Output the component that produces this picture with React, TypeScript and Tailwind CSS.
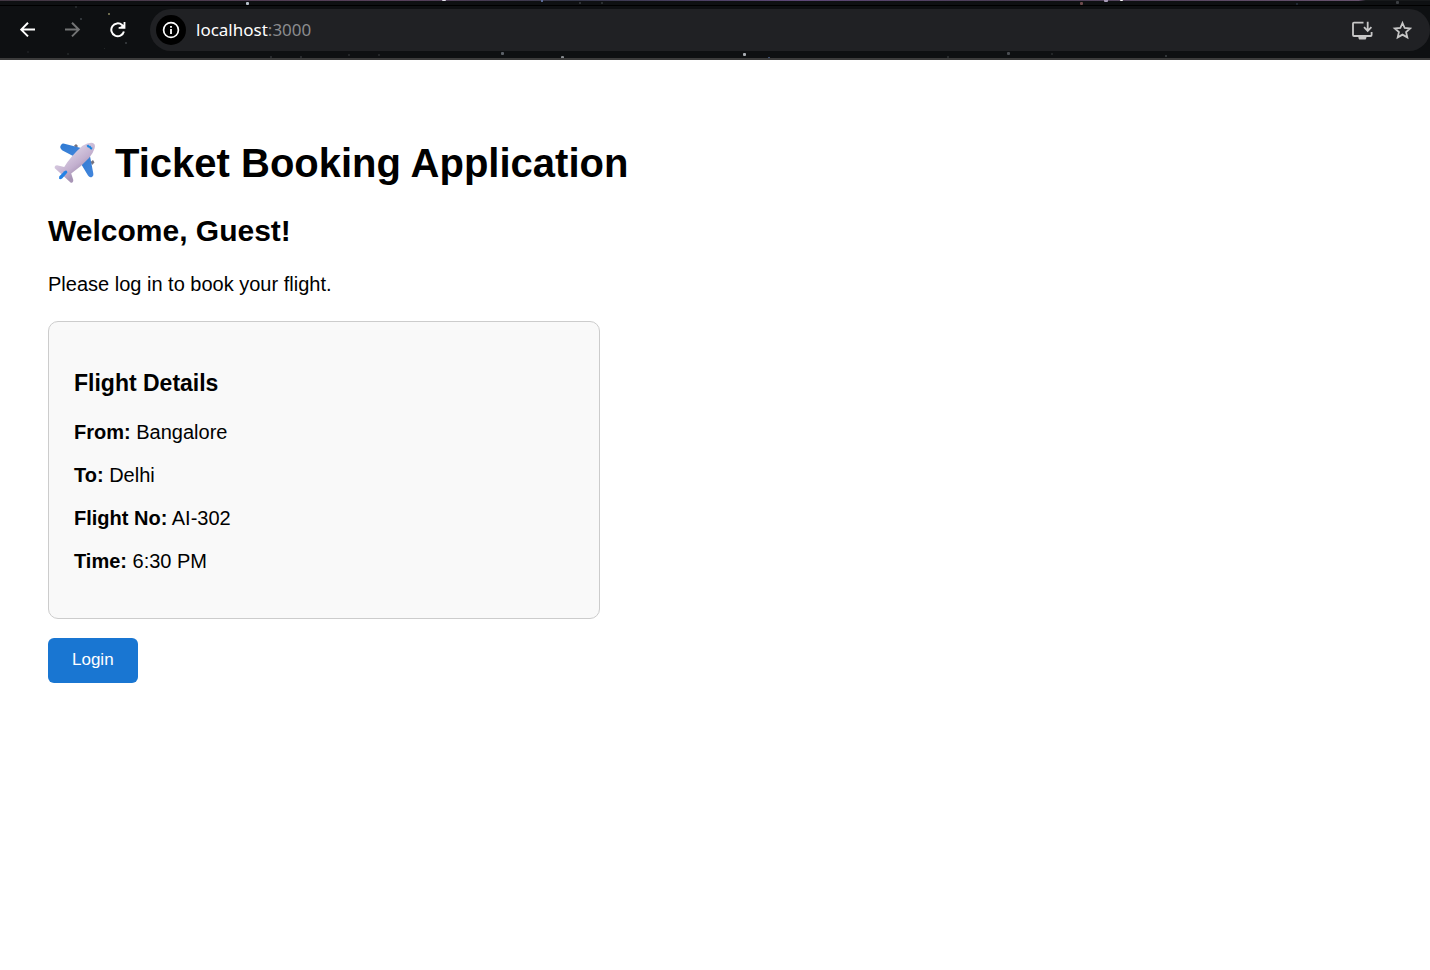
import React from 'react';

type Star = { x: number; y: number; r: number; fill: string };

const stars: Star[] = [
  { x: 246, y: 2, r: 3, fill: '#b9c2cc' },
  { x: 108, y: 13, r: 2, fill: '#8b8760' },
  { x: 80, y: 18, r: 2, fill: '#3d4247' },
  { x: 125, y: 42, r: 2, fill: '#3d4044' },
  { x: 67, y: 53, r: 2, fill: '#25282a' },
  { x: 27, y: 51, r: 2, fill: '#1f2124' },
  { x: 104, y: 48, r: 1, fill: '#2c2f31' },
  { x: 75, y: 6, r: 2, fill: '#2c2f33' },
  { x: 270, y: 56, r: 2, fill: '#303236' },
  { x: 300, y: 56, r: 2, fill: '#303236' },
  { x: 348, y: 54, r: 2, fill: '#2b2d2f' },
  { x: 378, y: 54, r: 2, fill: '#2b2d2f' },
  { x: 442, y: -3, r: 4, fill: '#e2e0ea' },
  { x: 501, y: 52, r: 3, fill: '#5c6168' },
  { x: 541, y: 0, r: 2, fill: '#6f83b8' },
  { x: 561, y: 56, r: 3, fill: '#85888d' },
  { x: 579, y: 2, r: 2, fill: '#3a3d40' },
  { x: 601, y: 2, r: 2, fill: '#35383b' },
  { x: 743, y: 53, r: 3, fill: '#a9adb3' },
  { x: 768, y: 57, r: 2, fill: '#4e638f' },
  { x: 947, y: 56, r: 2, fill: '#303336' },
  { x: 1007, y: 52, r: 3, fill: '#4a4d52' },
  { x: 1051, y: 53, r: 2, fill: '#2a2d2f' },
  { x: 1080, y: 2, r: 3, fill: '#6d4a4d' },
  { x: 1104, y: -2, r: 4, fill: '#a99bb8' },
  { x: 1120, y: -2, r: 3, fill: '#ffffff' },
  { x: 1165, y: 55, r: 2, fill: '#3d4044' },
  { x: 1296, y: 3, r: 2, fill: '#27303f' },
  { x: 1396, y: 1, r: 3, fill: '#3c3f43' },
];

function StarField() {
  return (
    <svg className="absolute inset-0 h-full w-full" aria-hidden="true">
      <defs>
        <linearGradient id="topEdge">
          <stop offset="0" stopColor="#423743" />
          <stop offset="0.28" stopColor="#57405b" />
          <stop offset="0.4" stopColor="#343648" />
          <stop offset="0.56" stopColor="#5e4878" />
          <stop offset="0.7" stopColor="#4a3d55" />
          <stop offset="0.95" stopColor="#66516d" />
          <stop offset="0.955" stopColor="#17191b" />
        </linearGradient>
      </defs>
      <rect width="100%" height="1" fill="url(#topEdge)" />
      {stars.map((s) => (
        <rect key={s.x} x={s.x} y={s.y} width={s.r} height={s.r} rx="1" fill={s.fill} />
      ))}
      <rect y="5" width="100%" height="1" fill="#000" />
    </svg>
  );
}

function ArrowIcon({ flip = false }: { flip?: boolean }) {
  return (
    <svg width="16" height="16" viewBox="0 0 16 16" fill="none" stroke="currentColor" strokeWidth="2" aria-hidden="true">
      {flip ? <path d="M0 7.6H13.5M7 0.8L13.8 7.6L7 14.4" /> : <path d="M15 7.6H1.5M8 0.8L1.2 7.6L8 14.4" />}
    </svg>
  );
}

function ReloadIcon() {
  return (
    <svg width="16" height="16" viewBox="0 0 16 16" aria-hidden="true">
      <path d="M13.9 9.4A6.4 6.4 0 1 1 12.1 3.1L13.6 4.6" fill="none" stroke="currentColor" strokeWidth="2" />
      <path d="M15.4 0V6.8H8.6V5.2L11 4.6L13.6 2.4V0Z" fill="currentColor" />
    </svg>
  );
}

function InfoIcon() {
  return (
    <svg width="18" height="18" viewBox="0 0 18 18" aria-hidden="true">
      <circle cx="9" cy="9" r="7.4" fill="none" stroke="currentColor" strokeWidth="1.7" />
      <path d="M9 5V6.8M9 8V13" stroke="currentColor" strokeWidth="1.8" />
    </svg>
  );
}

function InstallIcon() {
  return (
    <svg width="22" height="20" viewBox="0 0 22 20" fill="none" stroke="currentColor" strokeWidth="1.8" aria-hidden="true">
      <path d="M12.5 2.6H3Q2 2.6 2 3.6V15Q2 16 3 16H19.6Q20.6 16 20.6 15V12" />
      <path d="M16.7 1.8V10.4M13 7.2L16.7 10.9L20.4 7.2" />
      <path d="M7.4 16H15.4V18L14.6 19.4H8.2L7.4 18Z" fill="currentColor" stroke="none" />
    </svg>
  );
}

function StarIcon() {
  return (
    <svg width="20" height="20" viewBox="0 0 20 20" aria-hidden="true">
      <path
        d="M10.5 3L12.7 8L18.2 8.5L14.1 12.1L15.3 17.4L10.5 14.6L5.7 17.4L6.9 12.1L2.8 8.5L8.3 8Z"
        fill="none"
        stroke="currentColor"
        strokeWidth="1.8"
      />
    </svg>
  );
}

function PlaneIcon() {
  return (
    <svg className="ml-1.5 shrink-0" width="42" height="42" viewBox="0 0 42 42" aria-hidden="true">
      <defs>
        <linearGradient id="fuselage" x1="0.35" y1="0.3" x2="0.65" y2="0.7">
          <stop offset="0" stopColor="#d6c9df" />
          <stop offset="0.6" stopColor="#c3b0cf" />
          <stop offset="1" stopColor="#a895b6" />
        </linearGradient>
        <linearGradient id="wing" x1="0" y1="0" x2="1" y2="1">
          <stop offset="0" stopColor="#2f7ad2" />
          <stop offset="1" stopColor="#4386dc" />
        </linearGradient>
      </defs>
      <path d="M20 3.8L22 2L24 4L22 6.5ZM36.5 20L39 18L40.5 20.5L38 23Z" fill="#77727d" />
      <path d="M7.4 2.4Q8.4 1.2 10.4 1.8L28 6.2L20 14.5L8.5 8.4Q4.6 5.4 7.4 2.4Z" fill="url(#wing)" />
      <path d="M26.5 21L35.8 13L39.3 31.5Q39.8 33.4 38.5 34.5Q36 36.6 34 33.6Z" fill="url(#wing)" />
      <path
        d="M28.5 3.8Q34.5 0.2 38.8 1Q41.8 2 40.6 6.3Q39.3 11 35 16Q27 25 17.2 31.5L19.3 38Q19.3 41 16.8 40.8L9.2 33.8L0.8 26.3Q0 23.6 3 23.2L10.2 25Q17 14 28.5 3.8Z"
        fill="url(#fuselage)"
      />
      <path d="M5.4 34.2L10.4 29.2Q13 27.6 13.4 30.4L8.4 36.2Q6.2 38.2 5 36.6Z" fill="#2381e5" />
      <path d="M33.4 3.2L34.4 4.6L35.8 4.8L36.8 6.3L38.2 6.6" fill="none" stroke="#1684e2" strokeWidth="2" />
    </svg>
  );
}

function BrowserBar() {
  return (
    <header className="relative border-b-2 border-[#3c3c3c] bg-[#0e1012] pt-[9px] pb-[7px] font-['Noto_Sans',sans-serif]">
      <StarField />
      <div className="relative flex h-[42px] items-center">
        <nav className="flex w-[150px] shrink-0 gap-[29px] pl-5 text-white">
          <button type="button" aria-label="Back"><ArrowIcon /></button>
          <button type="button" aria-label="Forward" className="text-[#737475]"><ArrowIcon flip /></button>
          <button type="button" aria-label="Reload"><ReloadIcon /></button>
        </nav>
        <div className="flex h-full min-w-0 flex-1 items-center rounded-full bg-[#202124] pr-[18px] pl-1.5">
          <button type="button" aria-label="Site information" className="flex size-[30px] items-center justify-center rounded-full bg-black text-white">
            <InfoIcon />
          </button>
          <a href="#" className="ml-2.5 flex-1 text-[17px] leading-6 text-[#8b8c8e]">
            <span className="text-white">localhost</span>:3000
          </a>
          <div className="flex items-center gap-[19px] text-[#c7c7c7]">
            <button type="button" aria-label="Install app"><InstallIcon /></button>
            <button type="button" aria-label="Bookmark this page"><StarIcon /></button>
          </div>
        </div>
      </div>
    </header>
  );
}

const details = [
  { label: 'From:', value: 'Bangalore' },
  { label: 'To:', value: 'Delhi' },
  { label: 'Flight No:', value: 'AI-302' },
  { label: 'Time:', value: '6:30 PM' },
];

export default function App() {
  return (
    <div className="min-h-screen bg-white text-black">
      <BrowserBar />
      <main className="px-12 pt-20 pb-12 font-['Liberation_Sans',Arial,sans-serif] text-[20px] leading-[23px]">
        <h1 className="flex items-center gap-[19px] text-[40px] leading-[46px] font-bold">
          <PlaneIcon />
          Ticket Booking Application
        </h1>
        <h2 className="mt-7 text-[30px] leading-[34px] font-bold">Welcome, Guest!</h2>
        <p className="mt-[25px]">Please log in to book your flight.</p>
        <section className="mt-[25px] max-w-[552px] rounded-[10px] border border-[#cccccc] bg-[#f9f9f9] px-[25px] pt-12 pb-[45px]">
          <h3 className="text-[23px] leading-[26px] font-bold">Flight Details</h3>
          <div className="mt-[25px] flex flex-col gap-5">
            {details.map((d) => (
              <p key={d.label}>
                <strong>{d.label}</strong> {d.value}
              </p>
            ))}
          </div>
        </section>
        <button type="button" className="mt-[19px] block rounded-[6px] bg-[#1976d2] px-6 pt-2.5 pb-3 text-[17px] leading-[23px] text-white">
          Login
        </button>
      </main>
    </div>
  );
}
